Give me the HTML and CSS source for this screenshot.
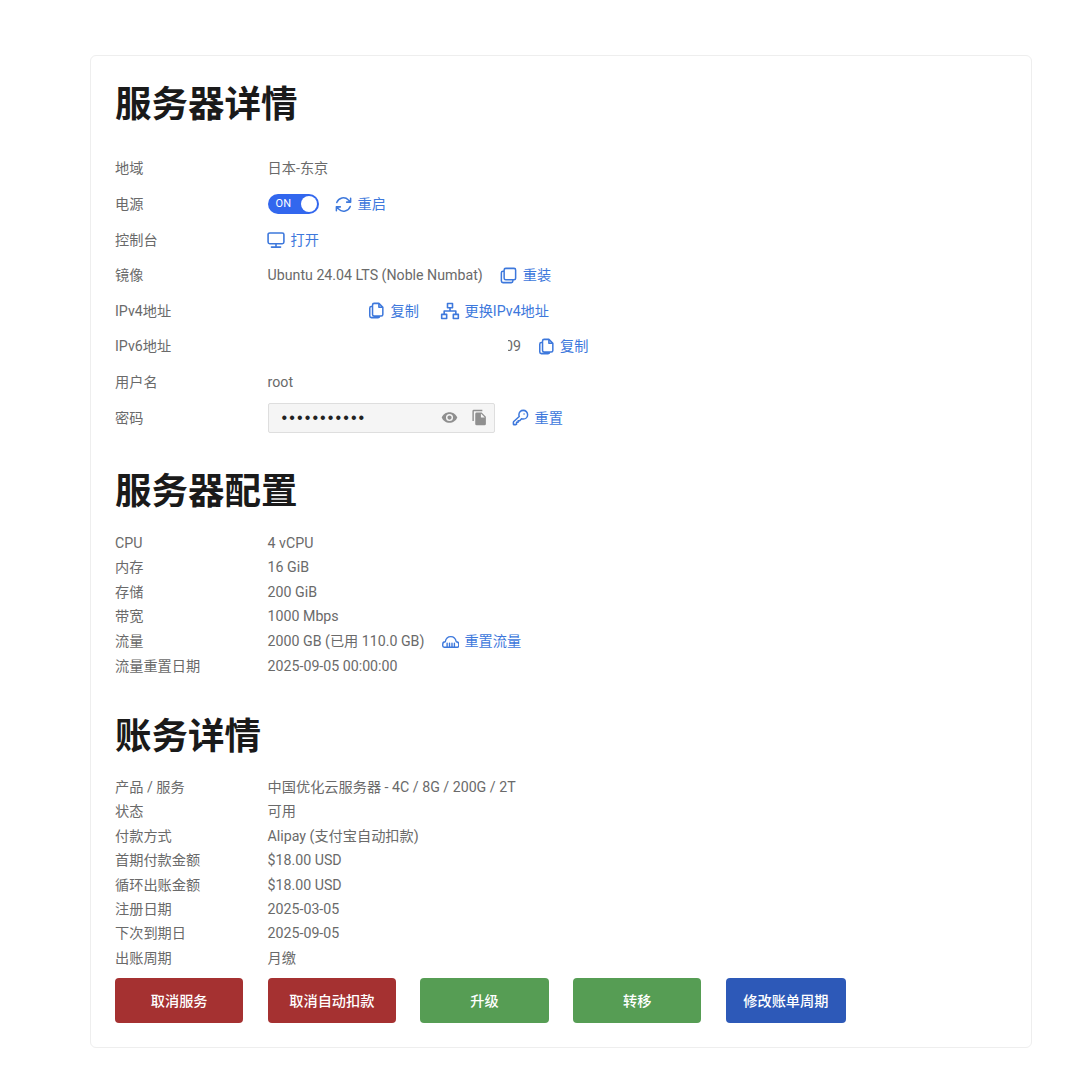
FILE: index.html
```html
<!DOCTYPE html>
<html lang="zh-CN">
<head>
<meta charset="utf-8">
<title>服务器详情</title>
<link rel="stylesheet" href="styles.css">
</head>
<body>
<main class="card">
  <h1 class="title-first">服务器详情</h1>
  <section class="rows rows-wide">
    <div class="row row-top"><span class="label">地域</span><span class="value">日本-东京</span></div>
    <div class="row"><span class="label">电源</span><span class="value">
      <span class="toggle"><span class="toggle-text">ON</span><span class="knob"></span></span>
      <a class="action action-power"><svg class="icon" viewBox="0 0 24 24"><path d="M16 9h5V4M3.500 9.500A8.800 8.800 0 0 1 18.200 6.300L21 9M8 15H3v5M20.500 14.500A8.800 8.800 0 0 1 5.800 17.700L3 15"/></svg>重启</a>
    </span></div>
    <div class="row"><span class="label">控制台</span><span class="value">
      <a class="action"><svg class="icon icon-wide" viewBox="0 0 24 24"><path d="M4.500 3.500h15a2 2 0 0 1 2 2v9a2 2 0 0 1-2 2h-15a2 2 0 0 1-2-2v-9a2 2 0 0 1 2-2zM12 16.500v4M6.500 20.500h11"/></svg>打开</a>
    </span></div>
    <div class="row"><span class="label">镜像</span><span class="value">Ubuntu 24.04 LTS (Noble Numbat)
      <a class="action action-after"><svg class="icon" viewBox="0 0 24 24"><path d="M8.500 3h10.500a2 2 0 0 1 2 2v10.500a2 2 0 0 1-2 2H8.500a2 2 0 0 1-2-2V5a2 2 0 0 1 2-2zM6.500 6.500H5a2 2 0 0 0-2 2V19a2 2 0 0 0 2 2h10.500a2 2 0 0 0 2-2v-1.500"/></svg>重装</a>
    </span></div>
    <div class="row"><span class="label">IPv4地址</span><span class="value">
      <span class="redacted redacted-v4"></span>
      <a class="action"><svg class="icon" viewBox="0 0 24 24"><path d="M9 3h6l5 5v9a2 2 0 0 1-2 2H9a2 2 0 0 1-2-2V5a2 2 0 0 1 2-2zM15 3v5h5M7 7H5.500a2 2 0 0 0-2 2v10a2 2 0 0 0 2 2H14a2 2 0 0 0 2-2"/></svg>复制</a>
      <a class="action action-next"><svg class="icon icon-wide" viewBox="0 0 24 24"><path d="M9 3h6v5H9zM2 16h6v5H2zM16 16h6v5h-6zM12 8v4M5 16v-4h14v4"/></svg>更换IPv4地址</a>
    </span></div>
    <div class="row"><span class="label">IPv6地址</span><span class="value">
      <span class="redacted redacted-v6"><span>09</span></span>
      <a class="action action-v6"><svg class="icon" viewBox="0 0 24 24"><path d="M9 3h6l5 5v9a2 2 0 0 1-2 2H9a2 2 0 0 1-2-2V5a2 2 0 0 1 2-2zM15 3v5h5M7 7H5.500a2 2 0 0 0-2 2v10a2 2 0 0 0 2 2H14a2 2 0 0 0 2-2"/></svg>复制</a>
    </span></div>
    <div class="row"><span class="label">用户名</span><span class="value">root</span></div>
    <div class="row row-password"><span class="label">密码</span><span class="value">
      <span class="password"><span class="dots">•••••••••••</span>
        <svg class="pw-icon pw-eye" viewBox="0 0 24 24"><path d="M12 4.500C7 4.500 2.700 7.600 1 12c1.700 4.400 6 7.500 11 7.500s9.300-3.100 11-7.500c-1.700-4.400-6-7.500-11-7.500zM12 17a5 5 0 1 1 0-10 5 5 0 0 1 0 10zm0-8a3 3 0 1 0 0 6 3 3 0 0 0 0-6z"/></svg>
        <svg class="pw-icon pw-copy" viewBox="0 0 24 24"><path d="M16 1H4a2 2 0 0 0-2 2v14h2V3h12zM15 5l6 6v10a2 2 0 0 1-2 2H8a2 2 0 0 1-2-2l.01-14a2 2 0 0 1 2-2zM14 12h5.500L14 6.500z"/></svg>
      </span>
      <a class="action action-pw"><svg class="icon" viewBox="0 0 24 24"><path d="M15.500 3a5.500 5.500 0 0 1 0 11c-.8 0-1.500-.1-2.200-.4L11 16H9v2H7v2.500L6 21H3.500L3 20.500V18l.5-1 6.900-6.300c-.3-.7-.4-1.400-.4-2.200A5.500 5.500 0 0 1 15.500 3zM16.500 7.500h.01"/></svg>重置</a>
    </span></div>
  </section>

  <h1 class="title-second">服务器配置</h1>
  <section class="rows rows-config">
    <div class="row"><span class="label">CPU</span><span class="value">4 vCPU</span></div>
    <div class="row"><span class="label">内存</span><span class="value">16 GiB</span></div>
    <div class="row"><span class="label">存储</span><span class="value">200 GiB</span></div>
    <div class="row"><span class="label">带宽</span><span class="value">1000 Mbps</span></div>
    <div class="row row-action"><span class="label">流量</span><span class="value">2000 GB (已用 110.0 GB)
      <a class="action action-traffic"><svg class="icon icon-cloud" viewBox="0 0 24 24"><path d="M3 19.500h18a2 2 0 0 0 2-2v-2a3.500 3.500 0 0 0-3.500-3.500C18.800 8 15.700 5 12 5S5.200 8 4.500 12A3.500 3.500 0 0 0 1 15.500v2a2 2 0 0 0 2 2zM7 19v-5M10.300 19v-5M13.700 19v-5M17 19v-5"/></svg>重置流量</a>
    </span></div>
    <div class="row"><span class="label">流量重置日期</span><span class="value">2025-09-05 00:00:00</span></div>
  </section>

  <h1 class="title-third">账务详情</h1>
  <section class="rows rows-billing">
    <div class="row"><span class="label">产品 / 服务</span><span class="value">中国优化云服务器 - 4C / 8G / 200G / 2T</span></div>
    <div class="row"><span class="label">状态</span><span class="value">可用</span></div>
    <div class="row"><span class="label">付款方式</span><span class="value">Alipay (支付宝自动扣款)</span></div>
    <div class="row"><span class="label">首期付款金额</span><span class="value">$18.00 USD</span></div>
    <div class="row"><span class="label">循环出账金额</span><span class="value">$18.00 USD</span></div>
    <div class="row"><span class="label">注册日期</span><span class="value">2025-03-05</span></div>
    <div class="row"><span class="label">下次到期日</span><span class="value">2025-09-05</span></div>
    <div class="row"><span class="label">出账周期</span><span class="value">月缴</span></div>
  </section>

  <div class="buttons">
    <button class="btn btn-red">取消服务</button>
    <button class="btn btn-red">取消自动扣款</button>
    <button class="btn btn-green">升级</button>
    <button class="btn btn-green">转移</button>
    <button class="btn btn-blue">修改账单周期</button>
  </div>
</main>
</body>
</html>
```

FILE: styles.css
```css
* { box-sizing: border-box; }

html, body { margin: 0; background: #fff; }

body {
  padding: 55px 48px 44px 90px;
  font-family: Roboto, "Noto Sans CJK SC", sans-serif;
  font-size: 14.2px;
  line-height: 24.4px;
  color: #6a6a6a;
}

.card {
  width: 942px;
  height: 993px;
  padding: 0 24px;
  background: #fff;
  border: 1px solid #eeeeee;
  border-radius: 6px;
}

h1 {
  margin: 0;
  font-size: 36.5px;
  font-weight: 700;
  line-height: 50px;
  color: #1a1a1a;
}

.title-first { padding-top: 24px; }
.title-second { margin-top: 30.7px; }
.title-third { margin-top: 33.3px; }

.rows { margin-top: 13.5px; }
.title-first + .rows { margin-top: 20.7px; }
.rows-config { margin-top: 13.7px; }
.rows-billing { margin-top: 12.9px; }

.rows-wide .row { height: 35.5px; }
.rows-wide .row-top { height: 35.8px; }
.rows-wide .row-password { height: 37px; }

.row { display: flex; align-items: center; height: 24.4px; }
.row-action { height: 26px; }

.label { flex: 0 0 152.6px; }

.value { display: flex; align-items: center; white-space: nowrap; }

.action {
  display: inline-flex;
  align-items: center;
  gap: 6px;
  color: #3d78dc;
}

.icon {
  flex: none;
  width: 19px;
  height: 19px;
  margin: -1.5px;
  fill: none;
  stroke: #3d78dc;
  stroke-width: 1.9;
  stroke-linecap: round;
  stroke-linejoin: round;
}

.icon-wide { width: 20px; height: 20px; }
.icon-cloud { width: 17.5px; height: 17.5px; margin: -0.75px; }

.action-power { margin-left: 17px; }
.action-after { margin-left: 18px; }
.action-next { margin-left: 22.5px; }
.action-v6 { margin-left: 18px; gap: 5px; }
.action-pw { margin-left: 18px; gap: 6px; }
.action-traffic { margin-left: 18px; }

.toggle {
  display: flex;
  align-items: center;
  justify-content: space-between;
  width: 51px;
  height: 20px;
  padding: 0 2px 0 8px;
  border-radius: 10px;
  background: #3267ee;
  color: #fff;
  font-size: 11px;
}

.knob {
  width: 16px;
  height: 16px;
  border-radius: 50%;
  background: #fff;
}

.redacted { display: block; }
.redacted-v4 { width: 101px; height: 20px; }

.redacted-v6 {
  display: flex;
  justify-content: flex-end;
  width: 13.4px;
  margin-left: 240px;
  overflow: hidden;
}

.redacted-v6 span { flex: none; }

.password {
  display: flex;
  align-items: center;
  width: 227px;
  height: 30px;
  padding: 0 5.5px 0 13px;
  background: #f5f5f5;
  border: 1px solid #dedede;
  border-radius: 2px;
}

.dots {
  flex: 1;
  color: #222;
  font-family: "Liberation Sans", sans-serif;
  font-size: 16px;
  letter-spacing: 2.1px;
}

.pw-icon { flex: none; width: 17px; height: 17px; fill: #8f8f8f; }
.pw-copy { margin-left: 13px; }

.buttons {
  display: flex;
  gap: 24.4px;
  margin-top: 7.6px;
}

.btn {
  min-width: 128.3px;
  height: 45px;
  padding: 0 17.5px;
  border: 0;
  border-radius: 4px;
  color: #fff;
  font-family: inherit;
  font-size: 14.2px;
  font-weight: 500;
}

.btn-red { background: #a53131; }
.btn-green { background: #569d54; }
.btn-blue { min-width: 0; background: #2d59b8; }
```
